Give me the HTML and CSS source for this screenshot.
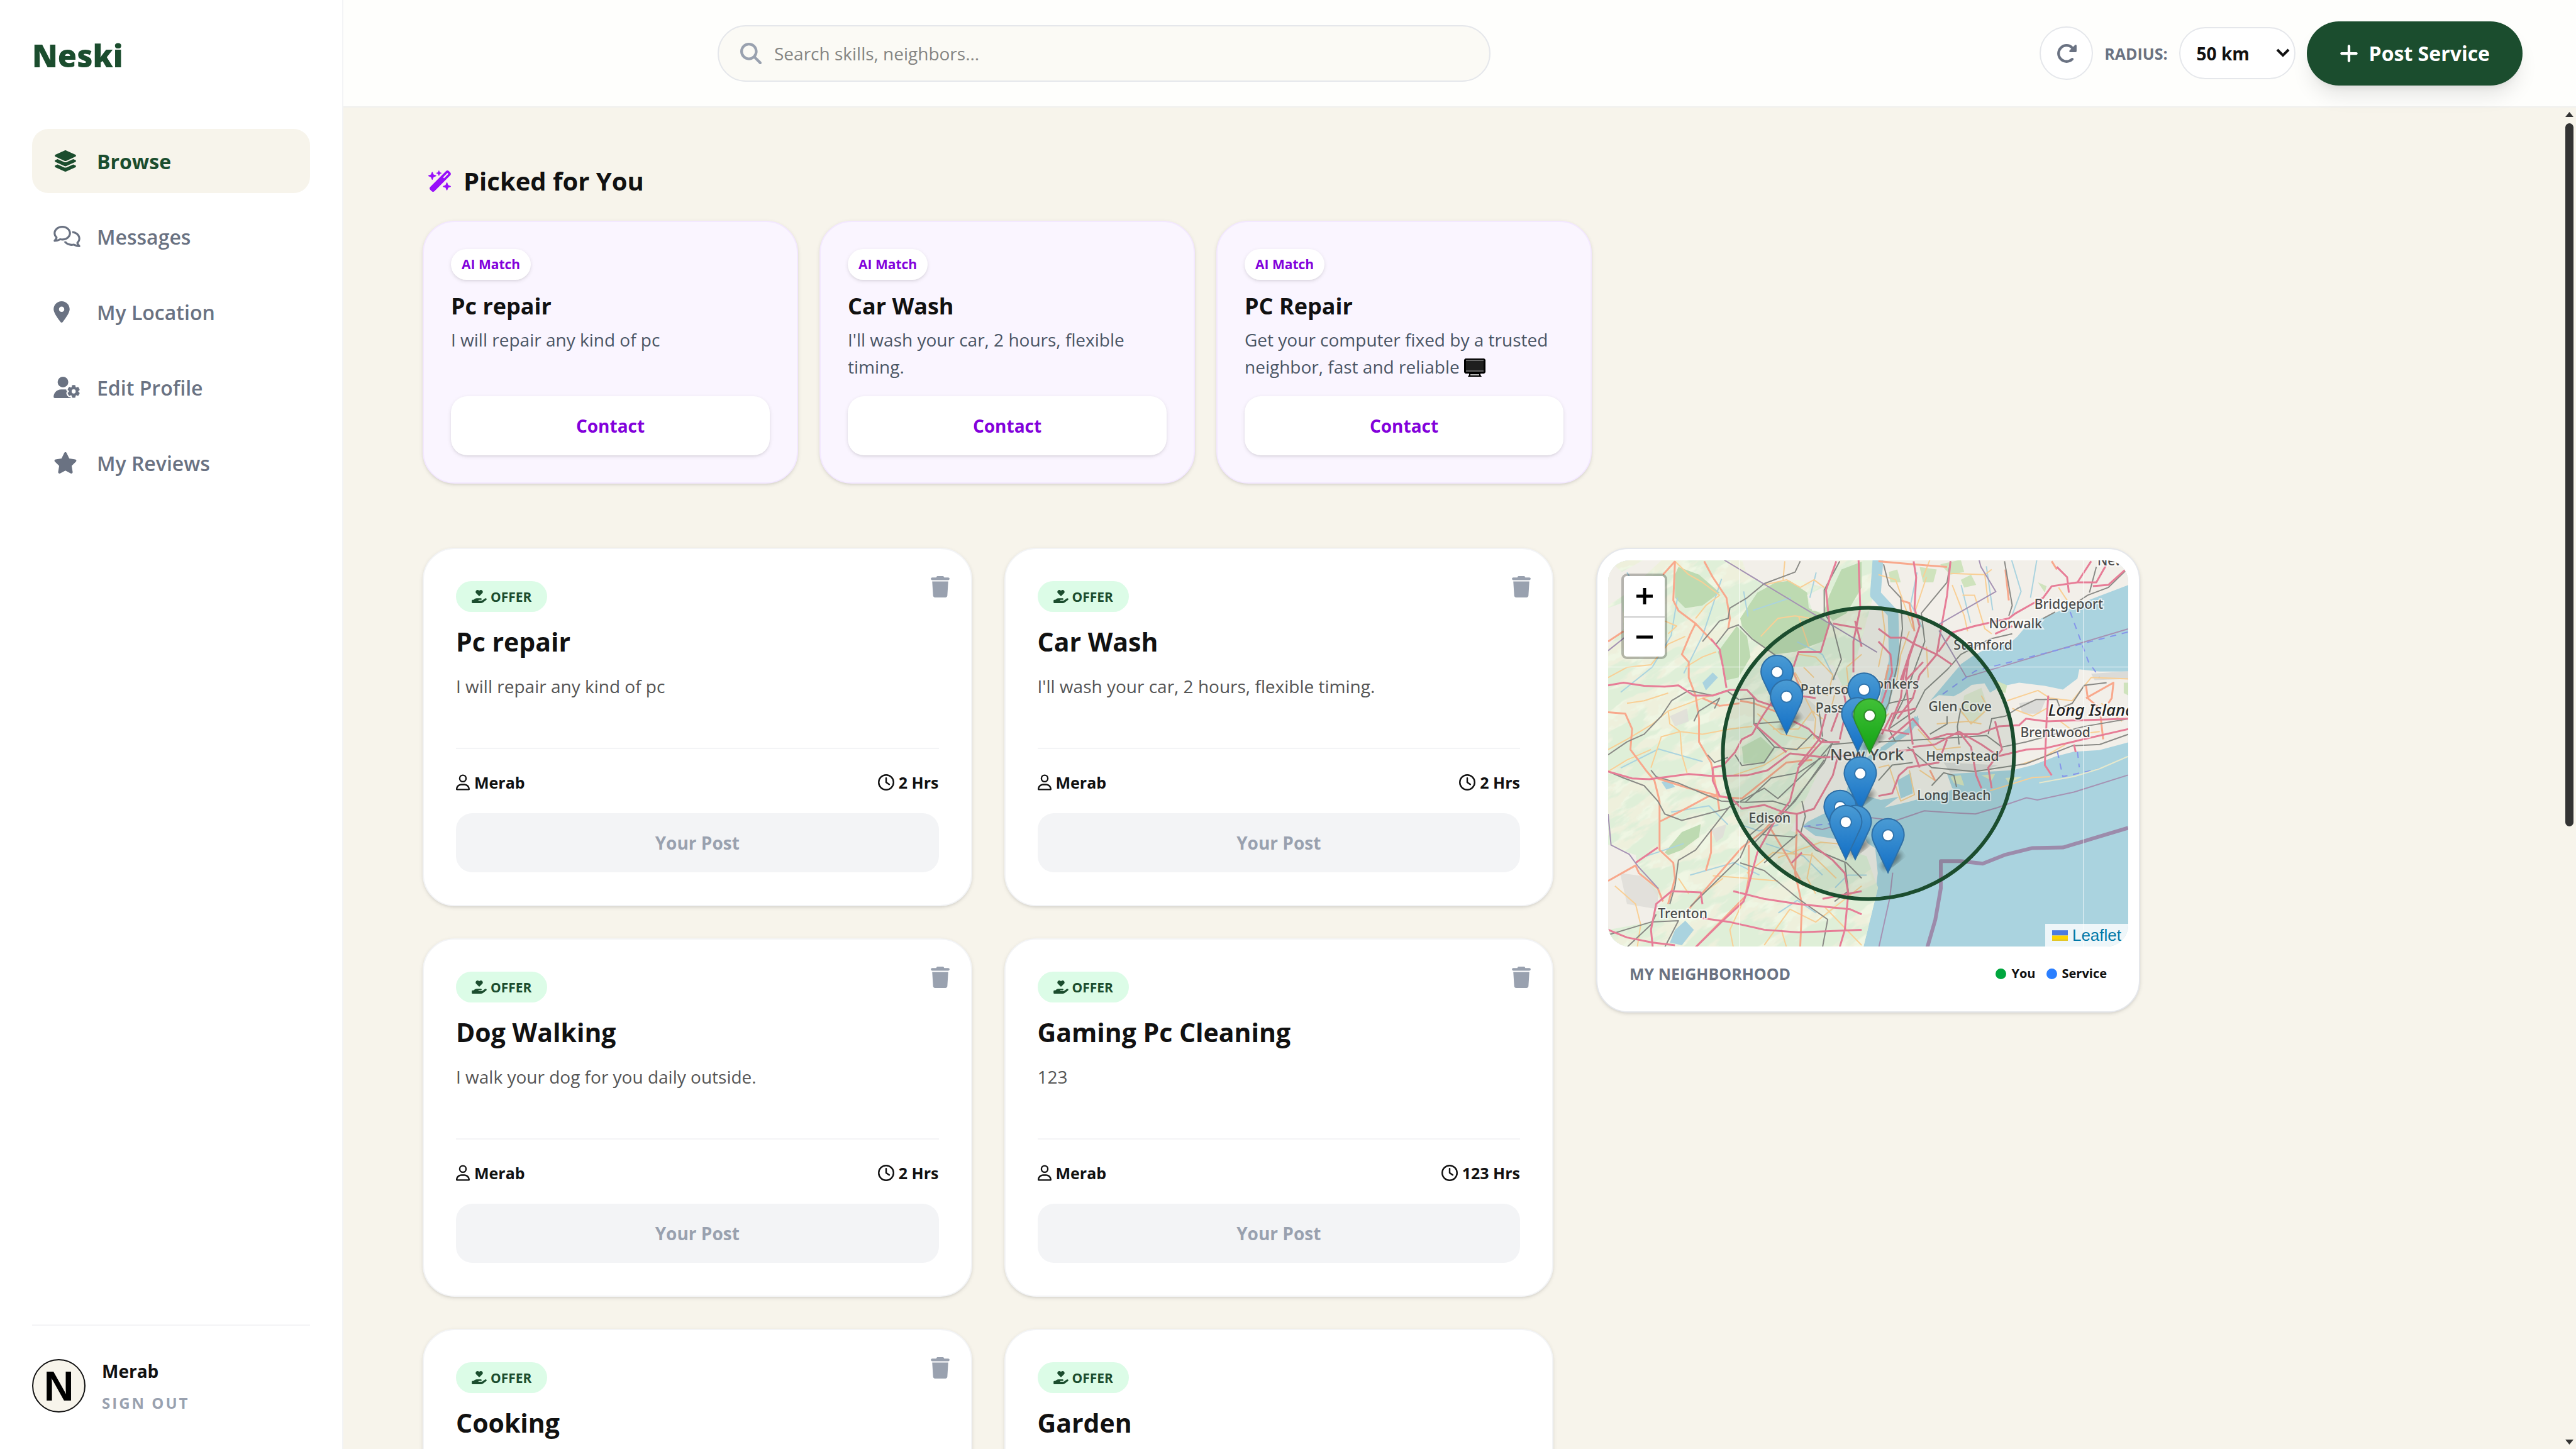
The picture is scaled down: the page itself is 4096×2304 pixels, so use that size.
FILE: index.html
```html
<!DOCTYPE html>
<html lang="en">
<head>
<meta charset="utf-8">
<title>Neski</title>
<link rel="stylesheet" href="styles.css">
</head>
<body>
<svg class="defs" aria-hidden="true">
  <symbol id="i-layers" viewBox="0 0 576 512"><path d="M264.5 5.2c14.9-6.9 32.1-6.9 47 0l218.6 101c8.5 3.9 13.9 12.4 13.9 21.8s-5.4 17.9-13.9 21.8l-218.6 101c-14.9 6.9-32.1 6.9-47 0L45.9 149.8C37.4 145.8 32 137.3 32 128s5.4-17.9 13.9-21.8L264.5 5.2zM476.9 209.6l53.2 24.6c8.5 3.9 13.9 12.4 13.9 21.8s-5.4 17.9-13.9 21.8l-218.6 101c-14.9 6.9-32.1 6.9-47 0L45.9 277.8C37.4 273.8 32 265.3 32 256s5.4-17.9 13.9-21.8l53.2-24.6 152 70.2c23.4 10.8 50.4 10.8 73.8 0l152-70.2zm-152 198.2l152-70.2 53.2 24.6c8.5 3.9 13.9 12.4 13.9 21.8s-5.4 17.9-13.9 21.8l-218.6 101c-14.9 6.9-32.1 6.9-47 0L45.9 405.8C37.4 401.8 32 393.3 32 384s5.4-17.9 13.9-21.8l53.2-24.6 152 70.2c23.4 10.8 50.4 10.8 73.8 0z"/></symbol>
  <symbol id="i-comments" viewBox="0 0 640 512"><path d="M88.2 309.1c9.8-18.3 6.8-40.8-7.5-55.8C59.4 230.9 48 204 48 176c0-63.5 63.8-128 160-128s160 64.5 160 128s-63.8 128-160 128c-13.1 0-25.8-1.3-37.8-3.6c-10.4-2-21.2-.6-30.7 4.2c-4.1 2.1-8.3 4.1-12.6 6c-16 7.2-32.9 13.5-49.9 18c2.8-4.6 5.4-9.1 7.9-13.6c1.1-1.9 2.2-3.9 3.2-5.9zM208 352c114.9 0 208-78.8 208-176S322.9 0 208 0S0 78.8 0 176c0 41.8 17.2 80.1 45.9 110.3c-.9 1.7-1.9 3.5-2.8 5.1c-10.3 18.4-22.3 36.5-36.6 52.1c-6.6 7-8.3 17.2-4.6 25.9C5.8 378.3 14.4 384 24 384c43 0 86.5-13.3 122.7-29.7c4.8-2.2 9.6-4.5 14.2-6.8c15.1 3 30.9 4.5 47.1 4.5zM432 480c16.2 0 31.9-1.6 47.1-4.5c4.6 2.3 9.4 4.6 14.2 6.8C529.5 498.7 573 512 616 512c9.6 0 18.2-5.7 22-14.5c3.8-8.8 2-19-4.6-25.9c-14.2-15.6-26.2-33.7-36.6-52.1c-.9-1.7-1.9-3.4-2.8-5.1C622.8 384.1 640 345.8 640 304c0-94.4-87.9-171.5-198.2-175.8c4.1 15.2 6.2 31.2 6.2 47.8l0 .6c87.2 6.7 144 67.5 144 127.4c0 28-11.4 54.9-32.7 77.2c-14.3 15-17.3 37.6-7.5 55.8c1.1 2 2.2 4 3.2 5.9c2.5 4.5 5.2 9 7.9 13.6c-17-4.5-33.9-10.7-49.9-18c-4.3-1.9-8.5-3.9-12.6-6c-9.5-4.8-20.3-6.2-30.7-4.2c-12.1 2.4-24.8 3.6-37.8 3.6c-61.7 0-110-26.5-136.8-62.3c-16 5.4-32.8 9.4-50 11.8C279 439.8 350 480 432 480z"/></symbol>
  <symbol id="i-pin" viewBox="0 0 384 512"><path d="M215.7 499.2C267 435 384 279.4 384 192C384 86 298 0 192 0S0 86 0 192c0 87.4 117 243 168.3 307.2c12.3 15.3 35.1 15.3 47.4 0zM192 128a64 64 0 1 1 0 128 64 64 0 1 1 0-128z"/></symbol>
  <symbol id="i-usergear" viewBox="0 0 640 512"><path d="M224 0a128 128 0 1 1 0 256A128 128 0 1 1 224 0zM178.3 304h91.4c11.8 0 23.4 1.2 34.5 3.3c-2.1 18.5 7.4 35.6 21.8 44.8c-16.6 10.6-26.7 31.6-20 53.3c4 12.9 9.4 25.5 16.4 37.6s15.2 23.1 24.4 33c15.7 16.9 39.6 18.4 57.2 8.7v.9c0 9.2 2.7 18.5 7.9 26.3H29.7C13.3 512 0 498.7 0 482.3C0 383.8 79.8 304 178.3 304zM436 218.2c0-7 4.5-13.3 11.3-14.8c10.5-2.4 21.5-3.7 32.7-3.7s22.2 1.3 32.7 3.7c6.8 1.5 11.3 7.8 11.3 14.8v17.7c0 7.8 4.8 14.8 11.6 18.7c6.8 3.9 15.1 4.5 21.8 .6l13.8-7.9c6.1-3.5 13.7-2.7 18.5 2.4c7.6 8.1 14.3 17.2 20.1 27.2s10.3 20.4 13.5 31c2.1 6.7-1.1 13.7-7.2 17.2l-14.4 8.3c-6.5 3.7-10 10.9-10 18.4s3.5 14.7 10 18.4l14.4 8.3c6.1 3.5 9.2 10.5 7.2 17.2c-3.3 10.6-7.8 21-13.5 31s-12.5 19.1-20.1 27.2c-4.8 5.1-12.5 5.9-18.5 2.4l-13.8-7.9c-6.7-3.9-15.1-3.3-21.8 .6c-6.8 3.9-11.6 10.9-11.6 18.7v17.7c0 7-4.5 13.3-11.3 14.8c-10.5 2.4-21.5 3.7-32.7 3.7s-22.2-1.3-32.7-3.7c-6.8-1.5-11.3-7.8-11.3-14.8V467.8c0-7.9-4.9-14.9-11.7-18.9c-6.8-3.9-15.2-4.5-22-.6l-13.5 7.8c-6.1 3.5-13.7 2.7-18.5-2.4c-7.6-8.1-14.3-17.2-20.1-27.2s-10.3-20.4-13.5-31c-2.1-6.7 1.1-13.7 7.2-17.2l14-8.1c6.5-3.8 10.1-11.1 10.1-18.6s-3.5-14.8-10.1-18.6l-14-8.1c-6.1-3.5-9.2-10.5-7.2-17.2c3.3-10.6 7.7-21 13.5-31s12.5-19.1 20.1-27.2c4.8-5.1 12.4-5.9 18.5-2.4l13.6 7.8c6.8 3.9 15.2 3.3 22-.6c6.9-3.9 11.7-11 11.7-18.9V218.2zm92.1 133.5a48.1 48.1 0 1 0 -96.1 0 48.1 48.1 0 1 0 96.1 0z"/></symbol>
  <symbol id="i-star" viewBox="0 0 576 512"><path d="M316.9 18C311.6 7 300.4 0 288.1 0s-23.4 7-28.8 18L195 150.3 51.4 171.5c-12 1.8-22 10.2-25.7 21.7s-.7 24.2 7.9 32.7L137.8 329 113.2 474.7c-2 12 3 24.2 12.9 31.3s23 8 33.8 2.3l128.3-68.5 128.3 68.5c10.8 5.7 23.9 4.9 33.8-2.3s14.9-19.3 12.9-31.3L438.5 329 542.7 225.9c8.6-8.5 11.7-21.2 7.9-32.7s-13.7-19.9-25.7-21.7L381.2 150.3 316.9 18z"/></symbol>
  <symbol id="i-search" viewBox="0 0 512 512"><path d="M416 208c0 45.9-14.9 88.3-40 122.7L502.6 457.4c12.5 12.5 12.5 32.8 0 45.3s-32.8 12.5-45.3 0L330.7 376c-34.4 25.2-76.8 40-122.7 40C93.1 416 0 322.9 0 208S93.1 0 208 0S416 93.1 416 208zM208 352a144 144 0 1 0 0-288 144 144 0 1 0 0 288z"/></symbol>
  <symbol id="i-rotate" viewBox="0 0 512 512"><path d="M463.5 224H472c13.3 0 24-10.7 24-24V72c0-9.7-5.8-18.5-14.8-22.2s-19.3-1.7-26.2 5.2L413.4 96.6c-87.6-86.5-228.7-86.2-315.8 1c-87.5 87.5-87.5 229.3 0 316.8s229.3 87.5 316.8 0c12.5-12.5 12.5-32.8 0-45.3s-32.8-12.5-45.3 0c-62.5 62.5-163.8 62.5-226.3 0s-62.5-163.8 0-226.3c62.2-62.2 162.7-62.5 225.3-1L327 183c-6.9 6.9-8.9 17.2-5.2 26.2s12.5 14.8 22.2 14.8H463.5z"/></symbol>
  <symbol id="i-plus" viewBox="0 0 448 512"><path d="M256 80c0-17.7-14.3-32-32-32s-32 14.3-32 32V224H48c-17.7 0-32 14.3-32 32s14.3 32 32 32H192V432c0 17.7 14.3 32 32 32s32-14.3 32-32V288H400c17.7 0 32-14.3 32-32s-14.3-32-32-32H256V80z"/></symbol>
  <symbol id="i-wand" viewBox="0 0 576 512"><path d="M234.7 42.7L197 56.8c-3 1.1-5 4-5 7.2s2 6.1 5 7.2l37.7 14.1L248.8 123c1.1 3 4 5 7.2 5s6.1-2 7.2-5l14.1-37.7L315 71.2c3-1.1 5-4 5-7.2s-2-6.1-5-7.2L277.3 42.7 263.2 5c-1.1-3-4-5-7.2-5s-6.1 2-7.2 5L234.7 42.7zM46.1 395.4c-18.7 18.7-18.7 49.1 0 67.9l34.6 34.6c18.7 18.7 49.1 18.7 67.9 0L529.9 116.5c18.7-18.7 18.7-49.1 0-67.9L495.3 14.1c-18.7-18.7-49.1-18.7-67.9 0L46.1 395.4zM484.6 82.6l-105 105-23.3-23.3 105-105 23.3 23.3zM7.5 117.2C3 118.9 0 123.2 0 128s3 9.1 7.5 10.8L64 160l21.2 56.5c1.7 4.5 6 7.5 10.8 7.5s9.1-3 10.8-7.5L128 160l56.5-21.2c4.5-1.7 7.5-6 7.5-10.8s-3-9.1-7.5-10.8L128 96 106.8 39.5C105.1 35 100.8 32 96 32s-9.1 3-10.8 7.5L64 96 7.5 117.2zm352 256c-4.5 1.7-7.5 6-7.5 10.8s3 9.1 7.5 10.8L416 416l21.2 56.5c1.7 4.5 6 7.5 10.8 7.5s9.1-3 10.8-7.5L480 416l56.5-21.2c4.5-1.7 7.5-6 7.5-10.8s-3-9.1-7.5-10.8L480 352l-21.2-56.5c-1.7-4.5-6-7.5-10.8-7.5s-9.1 3-10.8 7.5L416 352l-56.5 21.2z"/></symbol>
  <symbol id="i-trash" viewBox="0 0 448 512"><path d="M135.2 17.7L128 32H32C14.3 32 0 46.3 0 64S14.3 96 32 96H416c17.7 0 32-14.3 32-32s-14.3-32-32-32H320l-7.2-14.3C307.4 6.8 296.3 0 284.2 0H163.8c-12.1 0-23.2 6.8-28.6 17.7zM416 128H32L53.2 467c1.6 25.3 22.6 45 47.9 45H346.9c25.3 0 46.3-19.7 47.9-45L416 128z"/></symbol>
  <symbol id="i-user" viewBox="0 0 448 512"><path d="M304 128a80 80 0 1 0 -160 0 80 80 0 1 0 160 0zM96 128a128 128 0 1 1 256 0A128 128 0 1 1 96 128zM49.3 464H398.7c-8.9-63.3-63.3-112-129-112H178.3c-65.7 0-120.1 48.7-129 112zM0 482.3C0 383.8 79.8 304 178.3 304h91.4C368.2 304 448 383.8 448 482.3c0 16.4-13.3 29.7-29.7 29.7H29.7C13.3 512 0 498.7 0 482.3z"/></symbol>
  <symbol id="i-clock" viewBox="0 0 512 512"><path d="M464 256A208 208 0 1 1 48 256a208 208 0 1 1 416 0zM0 256a256 256 0 1 0 512 0A256 256 0 1 0 0 256zM232 120V256c0 8 4 15.5 10.7 20l96 64c11 7.4 25.9 4.4 33.3-6.7s4.4-25.9-6.7-33.3L280 243.2V120c0-13.3-10.7-24-24-24s-24 10.7-24 24z"/></symbol>
  <symbol id="i-give" viewBox="0 0 576 512"><path d="M148 76.6C148 34.3 182.3 0 224.6 0c20.3 0 39.8 8.1 54.1 22.4l9.3 9.3 9.3-9.3C311.6 8.1 331.1 0 351.4 0C393.7 0 428 34.3 428 76.6c0 20.3-8.1 39.8-22.4 54.1L302.1 234.1c-7.8 7.8-20.5 7.8-28.3 0L170.4 130.7C156.1 116.4 148 96.9 148 76.6zM568.2 336.3c13.1 17.8 9.3 42.8-8.5 55.9L433.1 485.5c-23.4 17.2-51.6 26.5-80.7 26.5H192 32c-17.7 0-32-14.3-32-32V416c0-17.7 14.3-32 32-32H68.8l44.9-36c22.7-18.2 50.9-28 80-28H272h16 64c17.7 0 32 14.3 32 32s-14.3 32-32 32H288 272c-8.8 0-16 7.2-16 16s7.2 16 16 16H392.6l119.7-88.2c17.8-13.1 42.8-9.3 55.9 8.5z"/></symbol>
</svg>

<div class="app">
  <aside class="sidebar">
    <div class="logo">Neski</div>
    <nav class="nav">
      <a class="nav-item active" href="#"><span class="nav-icon"><svg class="w576"><use href="#i-layers"/></svg></span>Browse</a>
      <a class="nav-item" href="#"><span class="nav-icon"><svg class="w640"><use href="#i-comments"/></svg></span>Messages</a>
      <a class="nav-item" href="#"><span class="nav-icon"><svg class="w384"><use href="#i-pin"/></svg></span>My Location</a>
      <a class="nav-item" href="#"><span class="nav-icon"><svg class="w640"><use href="#i-usergear"/></svg></span>Edit Profile</a>
      <a class="nav-item" href="#"><span class="nav-icon"><svg class="w576"><use href="#i-star"/></svg></span>My Reviews</a>
    </nav>
    <div class="account">
      <div class="avatar">N</div>
      <div class="account-text">
        <div class="account-name">Merab</div>
        <button class="signout" type="button">SIGN OUT</button>
      </div>
    </div>
  </aside>

  <div class="page">
    <header class="topbar">
      <label class="search">
        <svg><use href="#i-search"/></svg>
        <input type="text" placeholder="Search skills, neighbors..." aria-label="Search">
      </label>
      <div class="actions">
        <button class="refresh" type="button" aria-label="Refresh"><svg><use href="#i-rotate"/></svg></button>
        <label class="radius-label" for="radius">RADIUS:</label>
        <div class="select">
          <select id="radius"><option>50 km</option></select>
          <svg viewBox="0 0 22 14"><path d="M2 2L11 11L20 2" fill="none" stroke="#111" stroke-width="4"/></svg>
        </div>
        <button class="post" type="button"><svg><use href="#i-plus"/></svg>Post Service</button>
      </div>
    </header>

    <div class="body">
      <main class="content">
        <h2 class="picked-title"><svg><use href="#i-wand"/></svg>Picked for You</h2>
        <div class="picked">
          <article class="pick">
            <span class="ai">AI Match</span>
            <h3>Pc repair</h3>
            <p>I will repair any kind of pc</p>
            <button type="button">Contact</button>
          </article>
          <article class="pick">
            <span class="ai">AI Match</span>
            <h3>Car Wash</h3>
            <p>I'll wash your car, 2 hours, flexible timing.</p>
            <button type="button">Contact</button>
          </article>
          <article class="pick">
            <span class="ai">AI Match</span>
            <h3>PC Repair</h3>
            <p>Get your computer fixed by a trusted neighbor, fast and reliable <svg class="monitor" viewBox="0 0 34 29"><path d="M2 0H32L34 2V22L32 24H26V26L28 29H6L8 26V24H2L0 22V2Z" fill="#000"/><path d="M3 3H31V20H3Z" fill="#1f1f1f"/><path d="M3 3H31M3 20H31" stroke="#bbb"/><path d="M10 26H24" stroke="#bbb" stroke-width="2"/></svg></p>
            <button type="button">Contact</button>
          </article>
        </div>

        <div class="columns">
          <section class="posts">
            <article class="card">
              <button class="trash" type="button" aria-label="Delete"><svg><use href="#i-trash"/></svg></button>
              <span class="offer"><svg><use href="#i-give"/></svg>OFFER</span>
              <h3>Pc repair</h3>
              <p>I will repair any kind of pc</p>
              <div class="meta"><span><svg class="user"><use href="#i-user"/></svg>Merab</span><span><svg class="clock"><use href="#i-clock"/></svg>2 Hrs</span></div>
              <button class="own" type="button" disabled>Your Post</button>
            </article>
            <article class="card">
              <button class="trash" type="button" aria-label="Delete"><svg><use href="#i-trash"/></svg></button>
              <span class="offer"><svg><use href="#i-give"/></svg>OFFER</span>
              <h3>Car Wash</h3>
              <p>I'll wash your car, 2 hours, flexible timing.</p>
              <div class="meta"><span><svg class="user"><use href="#i-user"/></svg>Merab</span><span><svg class="clock"><use href="#i-clock"/></svg>2 Hrs</span></div>
              <button class="own" type="button" disabled>Your Post</button>
            </article>
            <article class="card">
              <button class="trash" type="button" aria-label="Delete"><svg><use href="#i-trash"/></svg></button>
              <span class="offer"><svg><use href="#i-give"/></svg>OFFER</span>
              <h3>Dog Walking</h3>
              <p>I walk your dog for you daily outside.</p>
              <div class="meta"><span><svg class="user"><use href="#i-user"/></svg>Merab</span><span><svg class="clock"><use href="#i-clock"/></svg>2 Hrs</span></div>
              <button class="own" type="button" disabled>Your Post</button>
            </article>
            <article class="card">
              <button class="trash" type="button" aria-label="Delete"><svg><use href="#i-trash"/></svg></button>
              <span class="offer"><svg><use href="#i-give"/></svg>OFFER</span>
              <h3>Gaming Pc Cleaning</h3>
              <p>123</p>
              <div class="meta"><span><svg class="user"><use href="#i-user"/></svg>Merab</span><span><svg class="clock"><use href="#i-clock"/></svg>123 Hrs</span></div>
              <button class="own" type="button" disabled>Your Post</button>
            </article>
            <article class="card">
              <button class="trash" type="button" aria-label="Delete"><svg><use href="#i-trash"/></svg></button>
              <span class="offer"><svg><use href="#i-give"/></svg>OFFER</span>
              <h3>Cooking</h3>
            </article>
            <article class="card">
              <span class="offer"><svg><use href="#i-give"/></svg>OFFER</span>
              <h3>Garden</h3>
            </article>
          </section>

          <aside class="map-card">
            <div class="map">
              <svg class="map-art" viewBox="0 0 825 614" preserveAspectRatio="xMidYMid slice">
                <defs>
                  <filter id="woods" x="0" y="0" width="100%" height="100%">
                    <feTurbulence type="fractalNoise" baseFrequency=".01 .035" numOctaves="5" seed="7"/>
                    <feColorMatrix values="0 0 0 0 .74  0 0 0 0 .86  0 0 0 0 .69  12 0 0 0 -5.400"/>
                  </filter>
                  <filter id="fields" x="0" y="0" width="100%" height="100%">
                    <feTurbulence type="fractalNoise" baseFrequency=".03 .05" numOctaves="4" seed="21"/>
                    <feColorMatrix values="0 0 0 0 .86  0 0 0 0 .92  0 0 0 0 .77  9 0 0 0 -4.4"/>
                  </filter>
                  <filter id="soft"><feGaussianBlur stdDeviation="4"/></filter>
                  <linearGradient id="blue" x1="0" y1="0" x2="0" y2="1"><stop offset="0" stop-color="#4a9bd4"/><stop offset="1" stop-color="#126fc6"/></linearGradient>
                  <linearGradient id="green" x1="0" y1="0" x2="0" y2="1"><stop offset="0" stop-color="#41c037"/><stop offset="1" stop-color="#12a314"/></linearGradient>
                  <clipPath id="inland"><path d="M0 0H425L420 60L390 170L350 300L290 430L410 470L428 520L405 614H0Z"/></clipPath>
                  <g id="shade"><ellipse cx="17" cy="-12" rx="19" ry="7" transform="rotate(-38)" fill="#000" opacity=".45" filter="url(#soft)"/></g>
                  <path id="drop" d="M-25.5-60.5C-25.5-75-14-86.500 0-86.500S25.500-75 25.500-60.500C25.500-52 21-46 18-39L0-1L-18-39C-21-46-25.500-52-25.500-60.500Z"/>
                </defs>
                <rect width="825" height="614" fill="#aad3df"/>
                <g transform="scale(.578 .4932) translate(-52 -73)" fill="#f2efe9">
                  <path d="M52 73H1479V137L1440 155L1400 172L1360 190L1330 225L1280 240L1240 262L1200 285L1175 320L1150 345L1100 352L1060 378L1010 405L990 430L960 445L940 480L925 505L900 530L880 560L885 600L860 640L820 700L760 740L735 790L720 830L660 880L600 915L585 930L620 960L700 975L745 950L765 985L785 1000L792 1080L785 1150L775 1210L760 1270L748 1319H52Z"/>
                  <path d="M770 690L830 640L860 620L905 605L900 545L930 530L960 508L1000 512L1020 500L1050 475L1085 470L1100 500L1130 480L1180 468L1250 478L1300 490L1340 455L1345 425L1400 432L1479 432V660L1400 685L1330 690L1280 705L1230 728L1180 750L1140 775L1090 795L1040 790L990 815L880 850L810 870L850 835L800 845L755 830L750 780Z"/>
                </g>
                <path d="M200 0H825V40L640 110L560 165L480 260L400 300L330 330L420 150L430 0H200Z" fill="#f2efe9"/>
                <g clip-path="url(#inland)">
                  <rect width="825" height="614" fill="#eef0dc"/>
                  <g transform="rotate(-32 200 300)"><rect x="-260" y="-260" width="1000" height="1100" filter="url(#fields)"/><rect x="-260" y="-260" width="1000" height="1100" filter="url(#woods)"/></g>
                </g>
                <g transform="translate(-24.5 -25.600) scale(.2721 .4082)">
                  <g fill="#bddab1">
                    <path d="M500 90L620 120L740 190L640 240L540 250L480 210L480 120Z"/>
                    <path d="M860 290L960 190L1120 130L1250 190L1260 250L1330 270L1380 320L1340 380L1180 420L1060 430L950 380L870 320Z"/>
                    <path d="M1380 200L1450 100L1568 70V170L1480 270L1400 300L1350 260Z"/>
                    <path d="M730 420L840 320L900 360L920 440L850 520L780 530Z"/>
                    <path d="M870 790L980 750L1060 800L1000 850L880 855Z" opacity=".8"/>
                    <path d="M420 1200L520 1120L630 1090L620 1140L520 1190L440 1210Z"/>
                  </g>
                  <g fill="#f2efe9">
                    <path d="M90 240L180 200L400 65L300 62L170 110L90 62Z"/><path d="M90 250L170 230L180 330L90 400Z"/>
                    <path d="M870 62H1440L1350 170L1200 140L1000 155L900 120Z"/><path d="M1250 200L1340 170L1350 260L1280 260Z"/>
                    <path d="M90 1170L250 1210L270 1270L400 1390L340 1470L90 1500Z"/>
                    <path d="M1180 480L1400 470L1460 560L1568 600V800L1350 780L1240 700L1150 600Z"/>
                  </g>
                  <g fill="#dfddd8" opacity=".8"><path d="M160 1280L280 1290L380 1350L380 1420L200 1400Z"/><path d="M450 670L550 640L560 690L480 710Z"/><path d="M690 1110L780 1090L760 1140L720 1160Z"/><path d="M1180 560L1300 630L1290 690L1170 680Z"/></g>
                  <g fill="#aad3df"><path d="M400 925L450 920L480 945L430 955Z"/><path d="M640 540L700 500L730 520L660 570Z"/><path d="M480 1500L540 1465L590 1500L520 1560L450 1550Z"/></g>
                </g>
                <g transform="translate(428.800 -25.600) scale(.2721 .4082)" fill="#cfe3bd">
                  <path d="M60 110L110 100L130 150L70 150Z"/><path d="M360 80L480 62L500 110L420 120Z"/><path d="M480 140L540 120L570 160L500 170Z"/><path d="M240 90L340 100L320 150L260 150Z"/><path d="M1430 540H1458V590L1430 580Z"/><path d="M930 150L980 165L970 190Z"/>
                  <path d="M500 590L600 560L640 640L560 700L480 660Z" opacity=".5"/><path d="M680 530L750 550L740 580L690 570Z"/>
                  <path d="M820 620L980 600L940 660L840 660Z" fill="#dbdbd8"/><path d="M380 850L700 860L620 880L420 890Z" fill="#dbdbd8"/><path d="M1240 505L1458 495V525L1260 530Z" fill="#dbdbd8"/>
                  <path d="M110 920L190 890L200 970L130 990Z" fill="#aad3df"/><path d="M400 895L780 880L960 850L960 895L700 950L500 965L430 950Z" fill="#aad3df"/><path d="M420 905L480 900L500 940L440 930ZM600 900L680 895L660 920ZM740 910L840 905L760 930Z" fill="#dbe6c0"/>
                </g>
                <g class="water-lines">
                  <path class="hudson" d="M428 0L424 55L452 85L454 160L436 235L405 290L396 330L385 375"/>
                  <path class="hudson thin" d="M396 330L415 315L450 290L478 270L490 250"/>
                  <path d="M30 20L60 70L40 130M110 60L100 120L70 170L20 210M180 30L150 120L120 180M230 80L260 70L290 60M215 50L222 90M330 20L320 60M640 0L655 50L640 90M680 0L670 60M600 10L610 80M560 40L575 100M20 330L80 300L150 320M100 400L160 390L190 420M130 500L200 480L240 500M60 470L120 450M270 560L300 540L330 560M210 420L240 430L270 420M300 130L340 150L360 190M490 20L480 70L500 110M250 450L310 470L340 500M360 520L380 500L410 500"/>
                </g>
                <g transform="translate(-24.500 -25.600) scale(.2721 .4082)">
                  <g class="road minor">
                    <path d="M90 520L200 480L340 470L440 390L540 360M90 800L200 760L350 700L440 650L640 600L740 580M440 650L450 700L510 730L520 820L550 890M510 730L400 750L340 870M510 730L640 740L800 720L930 710M480 68L560 120L640 150L740 200L660 240L600 290M540 480L640 440L720 420M980 360L1080 290L1180 280L1270 290L1350 270M1000 160L1130 140L1210 170L1290 140L1350 170M1120 68L1110 140M130 1330L250 1400L280 1480L260 1568M900 1280L1050 1200L1280 1210L1420 1300M1000 1560L1150 1420L1300 1470L1568 1330M1200 430L1300 440L1400 510L1370 590L1230 560L1180 500"/>
                    <path d="M90 885L200 840L340 800M200 620L300 610L440 580M420 300L490 320L440 350M820 900L1000 860L1140 800L1300 790M850 560L930 480L1000 420M960 660L1100 740L1250 760M1050 720L1200 720L1280 650L1340 680M1240 600L1300 680L1290 760M1080 1220L1200 1190L1330 1160L1500 1170M870 1400L800 1500L820 1568M700 1290L900 1300L1080 1310M1280 1200L1250 1300L1300 1360M1460 700L1500 600L1480 480L1568 430M1390 640L1420 560L1568 540M640 1360L760 1300M560 1360L500 1300M1100 1500L1130 1568M1350 1410L1568 1560M1480 1100L1568 1090M1200 280L1230 340L1260 400M1290 520L1230 480"/>
                  </g>
                  <g class="road major">
                    <path d="M480 68L470 220L500 260L600 310L700 380M650 68L700 130L780 210L800 290L790 330M600 310L570 350L520 430L560 460L560 520L600 590L620 680L620 770L690 850L720 950L740 1040M90 655L190 660L230 720L220 800L310 880L360 920L390 1000L390 1080L390 1190L470 1240L480 1300L440 1400M390 1080L540 1030L680 980L870 990L1000 920L1130 850L1280 840M560 1420L700 1310L870 1180L990 1120L1100 1040M1190 1110L1180 1280L1220 1400L1210 1568M90 1310L250 1250L270 1280L380 1340L410 1390"/>
                    <path d="M690 1110L690 1200L660 1270M860 610L940 620L1100 660M640 600L740 630L860 620M1040 1110L1130 1210L1230 1330M910 1170L910 1300L890 1370L600 1568M370 910L560 950L740 980M90 380L180 340M1170 500L1230 590M1140 480L1170 570M410 120L480 68"/>
                  </g>
                  <g class="road rail">
                    <path d="M90 820L200 770L300 740L400 670L460 610L560 570L700 590L780 570L850 605L940 600L940 700L1060 790L1000 850L870 862L830 820M90 885L180 910L300 940L380 1000L420 1050L520 1075L780 1030L850 1005L1000 950L1080 990L1300 850L1390 780L1568 770M340 880L370 905L500 930L640 970L750 1000L900 1005L1050 1000L1150 1020L1350 850L1400 770M800 1020L600 1190L500 1230L480 1330L450 1400M90 1520L340 1470L500 1465L420 1568M570 1410L860 1220L920 1130L1010 1080M640 380L740 300L790 290L800 250L900 210L1000 155L1180 110L1210 68M720 390L790 330L850 315L930 370L1080 440M1440 68L1350 180L1350 270L1400 320L1450 450L1400 530M860 1240L1000 1270L1200 1380L1370 1460L1340 1568M1220 1000L1240 1060L1210 1130L1300 1190L1480 1240L1568 1300"/>
                    <path d="M940 700L1130 690M1060 790L1190 800L1280 740L1390 775M890 1005L1040 910L1200 890L1360 820M930 1170L1180 1000L1350 840M590 690L620 650L740 600L710 640M200 1568L340 1480L370 1440M670 820L710 850L790 830M990 1130L1180 1140M1000 1240L1190 1130M1320 650L1340 750M1410 1390L1490 1350L1470 1240"/>
                  </g>
                  <g class="road motor">
                    <path d="M90 550L180 540L300 552L420 555L500 550L590 590L700 590L800 568L900 568L960 610L1050 630L1200 590L1300 600M90 885L230 912L330 915L560 895L700 903L900 900L1020 880L1150 815L1350 830L1568 820M690 370L740 410L760 480L780 560M700 870L760 862L830 810L870 760L930 740L990 670L1060 600M700 870L700 920L740 980L810 990L870 1030L1000 1015L1100 1040L1190 1050L1190 1110L1300 1180L1400 1230L1470 1280L1490 1360L1470 1500L1440 1568M1190 1050L1290 1030L1400 900L1440 800M600 1568L750 1470L880 1390L900 1350L960 1200L1060 1080L1150 1000L1200 870L1350 760M820 1350L1000 1380L1200 1400L1500 1420L1568 1440M350 1568L340 1500L370 1400L460 1350L630 1355L640 1400M640 1455L800 1470L1000 1500L1200 1510L1568 1500M90 1500L200 1530L350 1550L480 1560M250 1240L380 1180M1170 480L1200 420L1330 420L1380 310L1360 180L1420 68"/>
                    <path d="M940 700L1060 770L1130 810M1170 690L1260 720L1330 770L1440 770M1400 310L1568 330M1550 62L1560 250L1520 380L1520 500M1440 760L1480 640L1460 560M1360 660L1320 760L1200 860M1390 730L1440 640M1220 1200L1160 1240M1340 1380L1568 1350M1530 300L1568 400"/>
                  </g>
                </g>
                <g transform="translate(428.800 -25.600) scale(.2721 .4082)">
                  <g class="road minor">
                    <path d="M0 120L100 140L200 330M430 160L500 280L520 340M490 200L560 200L620 330L660 350M420 115L620 120L660 100M640 230L620 120M0 870L60 860L130 1000L210 975L180 880M650 960L900 908L1000 905M750 610L930 570L1000 600L1130 610L1240 520L1458 525M470 640L540 700L640 640L600 590M0 480L40 350L20 250M100 560L130 430L180 340M280 400L290 520M0 700L60 660M230 720L340 800L480 790M340 700L520 690L600 700M780 640L900 670L980 640M1060 690L1160 740L1290 730M1300 620L1420 690M820 860L960 830L1090 780M400 840L540 830L700 840M240 880L330 920M1050 170L1100 220M280 130L200 290M300 62L260 130"/>
                  </g>
                  <g class="road major"><path d="M1210 550L1220 600L1290 640L1310 760M1210 600L1370 540L1360 600L1340 620M130 220L180 230L210 340M0 68L200 80L400 90M740 100L760 220M300 880L330 920M1010 68L1040 100M60 470L30 560"/></g>
                  <g class="road rail">
                    <path d="M30 80L60 160L130 210L140 330L110 470L60 620L0 700M420 68L400 150L250 270L270 380L220 470L150 600L60 720M735 68L780 240L760 280M1440 105L1340 170L1220 200L1130 240M1030 265L960 290M780 350L650 370L480 430L400 490L270 570L210 650L60 720L100 770M300 740L400 700L400 670M0 770L300 760L630 745L720 790L860 770L1200 710L1458 680M170 790L310 870L560 885L860 855L1130 785L1290 780L1458 740M480 640L460 710L470 780M640 740L660 680L740 670L810 640L920 605L1040 605L1060 640L1130 620L1200 550L1330 540M310 940L380 890L440 900L455 945M60 620L200 600M0 920L80 860L200 850M1270 90L1230 190"/>
                  </g>
                  <g class="road motor">
                    <path d="M205 68L220 130L210 250L240 320L200 400L150 500L130 600L60 720M420 68L400 200L370 310L340 430L240 510L200 600L110 680M1040 90L1100 130L1110 190M1240 68L1160 150L1010 165L960 210L800 270L760 290L560 320L430 345L350 420M1160 150L1270 150L1330 80M1440 100L1340 160L1250 165M0 330L70 365L150 365L210 390L340 430L430 470M60 760L200 680L300 760L400 740L580 740L700 710L820 705L860 680L980 690L1458 680M200 790L330 780L470 730L600 780L700 825L860 800L970 795L1130 770L1458 720M990 590L980 690L970 860L1010 900M680 690L720 800L640 870L660 950M480 740L540 790L570 900L600 950M0 980L80 970L120 900L170 870L350 850L400 760M1140 780L1150 810M130 530L180 430L230 340"/>
                    <path d="M0 380L70 430L80 500L20 620M180 430L160 520L180 680L200 780M20 740L80 660L220 640M260 460L160 530M60 810L200 800L240 870M0 720L180 740M680 350L780 320"/>
                  </g>
                </g>
                <g transform="scale(.578 .4932) translate(-52 -73)">
                  <path class="bound" d="M370 73L790 370M960 280L1116 175L1075 95L1070 73M960 300L1035 450L1479 295M600 930L640 940L760 900L840 912L920 880L980 885L1060 890L1120 870L1200 838L1230 845L1330 820L1479 765M833 1079L825 1160L795 1319M52 890L60 990L110 1020L135 1060L190 1130M52 365L100 320"/>
                  <path class="bound heavy" d="M928 1319L950 1230L965 1130L965 1042L1020 1042L1080 1050L1140 1022L1215 1000L1300 998L1380 970L1479 935"/>
                  <path class="ferry" d="M970 505L1060 430L1479 305M1320 240L1370 400L1400 450M1285 690L1300 770L1400 745M590 930L760 910M1340 690L1345 740"/>
                  <path class="barrier" d="M1235 790L1330 770L1400 745L1479 705"/>
                </g>
                <path class="grid" d="M208 0V614M754 0V614M0 170H825"/>
                <g class="places">
                  <text x="776" y="9">New Haven</text><text x="676" y="78">Bridgeport</text><text x="604" y="108">Norwalk</text><text x="548" y="142">Stamford</text><text x="508" y="240">Glen Cove</text><text x="654" y="281">Brentwood</text><text x="504" y="319">Hempstead</text><text x="490" y="381">Long Beach</text><text x="305" y="213">Paterson</text><text x="329" y="242">Passaic</text><text x="413" y="204">Yonkers</text><text x="223" y="417">Edison</text><text x="79" y="568">Trenton</text>
                  <text class="big" x="352" y="318">New York</text><text class="big region" x="698" y="247">Long Island</text>
                </g>
                <circle cx="413" cy="307" r="231" fill="#1b4d2e" fill-opacity=".1" stroke="#1b4d2e" stroke-width="6"/>
                <g><use href="#shade" x="268" y="238"/><use href="#shade" x="283" y="277"/><use href="#shade" x="406" y="266"/><use href="#shade" x="415" y="307"/><use href="#shade" x="400" y="399"/><use href="#shade" x="392" y="476"/><use href="#shade" x="444" y="497"/></g>
                <g class="pin"><g transform="translate(268 238)"><use href="#drop"/><circle cy="-60" r="9"/></g><g transform="translate(406 266)"><use href="#drop"/><circle cy="-60" r="9"/></g><g transform="translate(283 277)"><use href="#drop"/><circle cy="-60" r="9"/></g><g transform="translate(396 305)"><use href="#drop"/><circle cy="-60" r="9"/></g><g class="me" transform="translate(415 307)"><use href="#drop"/><circle cy="-60" r="9"/></g><g transform="translate(400 399)"><use href="#drop"/><circle cy="-60" r="9"/></g><g transform="translate(368 452)"><use href="#drop"/><circle cy="-60" r="9"/></g><g transform="translate(392 476)"><use href="#drop"/><circle cy="-60" r="9"/></g><g transform="translate(377 476)"><use href="#drop"/><circle cy="-60" r="9"/></g><g transform="translate(444 497)"><use href="#drop"/><circle cy="-60" r="9"/></g></g>
              </svg>
              <div class="zoom">
                <button type="button" aria-label="Zoom in"><svg viewBox="0 0 26 26"><path d="M0 13H26M13 0V26"/></svg></button>
                <button type="button" aria-label="Zoom out"><svg viewBox="0 0 26 26"><path d="M0 13H26"/></svg></button>
              </div>
              <a class="credit" href="#"><svg viewBox="0 0 12 8"><path fill="#4C7BE1" d="M0 0h12v4H0z"/><path fill="#FFD500" d="M0 4h12v3H0z"/><path fill="#E0BC00" d="M0 7h12v1H0z"/></svg>Leaflet</a>
            </div>
            <div class="map-foot">
              <span class="map-title">MY NEIGHBORHOOD</span>
              <span class="legend"><i class="dot you"></i>You</span>
              <span class="legend"><i class="dot service"></i>Service</span>
            </div>
          </aside>
        </div>
      </main>
      <div class="scrollbar" aria-hidden="true">
        <svg viewBox="0 0 13 8"><path d="M0 8L6.500 0L13 8Z"/></svg>
        <div class="track"><div class="thumb"></div></div>
        <svg viewBox="0 0 13 8"><path d="M0 0L6.500 8L13 0Z"/></svg>
      </div>
    </div>
  </div>
</div>
</body>
</html>
```
FILE: styles.css
```css
* { box-sizing: border-box; }
body, h2, h3, p { margin: 0; }
body { font-family: "Open Sans", "Noto Sans", sans-serif; font-size: 28px; color: #111; background: #f7f4eb; }
button, input, select { font: inherit; color: inherit; margin: 0; padding: 0; border: 0; background: none; }
a { color: inherit; text-decoration: none; }
svg { display: block; fill: currentColor; }
.defs { position: absolute; width: 0; height: 0; }

.app { display: flex; height: 100vh; overflow: hidden; }

/* Sidebar */
.sidebar { display: flex; flex-direction: column; width: 546px; flex: none; padding: 51px 51px 56px; background: #fff; border-right: 2px solid #f3f4f6; }
.logo { font-size: 49px; line-height: 74px; font-weight: 800; color: #1b4d2e; }
.nav { display: flex; flex-direction: column; gap: 18px; margin-top: 80px; }
.nav-item { display: flex; align-items: center; gap: 26px; height: 102px; padding: 0 34px; border-radius: 26px; font-size: 32px; font-weight: 600; color: #6a7282; }
.nav-item.active { background: #f7f4eb; color: #1b4d2e; font-weight: 700; }
.nav-icon { width: 43px; }
.nav-icon svg { height: 34px; }
.w576 { width: 38px; }
.w640 { width: 43px; }
.w384 { width: 26px; }
.account { display: flex; gap: 26px; margin-top: auto; padding-top: 51px; border-top: 2px solid #f3f4f6; align-items: center; }
.avatar { display: flex; align-items: center; justify-content: center; width: 85px; height: 85px; border: 2px solid #111; border-radius: 50%; background: #f7f4eb; color: #000; font: 700 66px/80px "Liberation Sans", sans-serif; }
.account-name { font-size: 28px; line-height: 43px; font-weight: 700; }
.signout { display: block; margin-top: 12px; font-size: 24px; line-height: 34px; font-weight: 700; color: #99a1af; letter-spacing: 3px; }

/* Top bar */
.page { flex: 1; min-width: 0; display: flex; flex-direction: column; }
.topbar { display: flex; align-items: center; height: 171px; padding: 0 85px; background: #fefefc; border-bottom: 2px solid #f0f0ee; flex: none; }
.search { display: flex; align-items: center; gap: 20px; flex: 0 1 1229px; height: 90px; margin-left: 510px; padding: 0 34px; border: 2px solid #e5e7eb; border-radius: 45px; background: #fbfaf5; }
.search svg { width: 34px; height: 34px; color: #99a1af; flex: none; }
.search input { flex: 1; font-size: 28px; outline: 0; }
.search input::placeholder { color: #858583; opacity: 1; }
.actions { display: flex; align-items: center; gap: 18px; margin-left: auto; }
.refresh { display: flex; align-items: center; justify-content: center; width: 85px; height: 85px; border: 2px solid #e5e7eb; border-radius: 50%; background: #fff; color: #6a7282; }
.refresh svg { width: 34px; height: 34px; }
.radius-label { font-size: 25px; font-weight: 700; color: #6a7282; }
.select { position: relative; }
.select select { appearance: none; width: 185px; height: 83px; padding: 0 26px; border: 2px solid #e5e7eb; border-radius: 42px; background: #fff; font-size: 28px; font-weight: 700; }
.select svg { position: absolute; right: 9px; top: 34px; width: 22px; height: 14px; pointer-events: none; }
.post { display: flex; align-items: center; gap: 17px; height: 102px; padding: 0 52px; border-radius: 51px; background: #1b4d2e; color: #fff; font-size: 32px; font-weight: 700; box-shadow: 0 21px 32px -6px rgba(0,0,0,.1), 0 9px 13px -9px rgba(0,0,0,.1); }
.post svg { width: 30px; height: 34px; }

/* Scroll area */
.body { display: flex; flex: 1; min-height: 0; }
.content { flex: 1; min-width: 0; padding: 87px 126px; overflow: hidden; }
.scrollbar { display: flex; flex-direction: column; width: 17px; padding: 7px 4px 7px 0; flex: none; color: #333; }
.scrollbar svg { width: 13px; height: 8px; }
.track { display: flex; flex-direction: column; flex: 1; padding: 10px 0; }
.track::after { content: ""; flex: 19; }
.thumb { flex: 22; border-radius: 7px; background: #333; }

/* Picked for you */
.picked-title { display: flex; align-items: center; gap: 18px; padding-left: 9px; font-size: 40px; line-height: 60px; font-weight: 700; }
.picked-title svg { width: 38px; height: 34px; color: #9810fa; }
.picked { display: flex; gap: 34px; margin: 33px 0 102px; }
.pick { display: flex; flex-direction: column; align-items: flex-start; width: 597px; padding: 43px; border: 2px solid #f3e8ff; border-radius: 51px; background: #faf5ff; box-shadow: 0 2px 6px rgba(0,0,0,.1), 0 2px 4px -2px rgba(0,0,0,.1); }
.ai { height: 49px; padding: 0 17px; border-radius: 25px; background: #fff; color: #8200db; font-size: 21px; line-height: 49px; font-weight: 700; box-shadow: 0 2px 6px rgba(0,0,0,.1), 0 2px 4px -2px rgba(0,0,0,.1); }
.pick h3 { margin-top: 12px; font-size: 36px; line-height: 60px; font-weight: 700; }
.pick p { min-height: 86px; margin-top: 2px; font-size: 28px; line-height: 43px; color: #4a5565; }
.monitor { display: inline-block; width: 34px; height: 29px; vertical-align: -5px; }
.pick button { width: 100%; height: 94px; margin-top: 25px; border-radius: 26px; background: #fff; color: #8200db; font-size: 28px; font-weight: 700; box-shadow: 0 2px 6px rgba(0,0,0,.1), 0 2px 4px -2px rgba(0,0,0,.1); }

/* Posts */
.columns { display: grid; grid-template-columns: repeat(3, 1fr); gap: 68px; max-width: 2731px; align-items: start; }
.posts { grid-column: span 2; display: grid; grid-template-columns: 1fr 1fr; gap: 51px; }
.card { position: relative; display: flex; flex-direction: column; min-height: 570px; padding: 51px; border: 2px solid #f3f4f6; border-radius: 51px; background: #fff; box-shadow: 0 2px 6px rgba(0,0,0,.1), 0 2px 4px -2px rgba(0,0,0,.1); }
.trash { position: absolute; top: 43px; right: 34px; color: #99a1af; }
.trash svg { width: 30px; height: 34px; }
.offer { display: flex; align-items: center; align-self: flex-start; gap: 6px; height: 49px; padding: 0 25px; border-radius: 25px; background: #dcfce7; color: #1b4d2e; font-size: 21px; font-weight: 700; }
.offer svg { width: 24px; height: 21px; }
.card h3 { margin-top: 17px; font-size: 41px; line-height: 60px; font-weight: 700; }
.card p { min-height: 97px; margin-top: 17px; font-size: 28px; line-height: 48px; color: #555; }
.meta { display: flex; justify-content: space-between; margin-top: 25px; padding-top: 36px; border-top: 2px solid #f3f4f6; font-size: 25px; line-height: 34px; font-weight: 700; }
.meta span { display: flex; align-items: center; gap: 7px; }
.user { width: 22px; height: 26px; }
.clock { width: 26px; height: 26px; }
.own { height: 94px; margin-top: 32px; border-radius: 26px; background: #f3f4f6; color: #99a1af; font-size: 28px; font-weight: 700; }

/* Map */
.map-card { padding: 18px 17px 17px; border: 2px solid #e5e7eb; border-radius: 51px; background: #fff; box-shadow: 0 2px 6px rgba(0,0,0,.1), 0 2px 4px -2px rgba(0,0,0,.1); }
.map { position: relative; height: 614px; border-radius: 34px; overflow: hidden; }
.map-art { width: 100%; height: 100%; }
.map-art path { vector-effect: non-scaling-stroke; }
.road, .water-lines path, .bound, .ferry, .barrier, .grid { fill: none; stroke-linejoin: round; }
.minor { stroke: #f9cf95; stroke-width: 2px; }
.major { stroke: #f8a88c; stroke-width: 3px; }
.motor { stroke: #e77d97; stroke-width: 3px; }
.rail { stroke: #8a8a86; stroke-width: 2px; }
.water-lines path { stroke: #aad3df; stroke-width: 2px; }
.water-lines .hudson { stroke-width: 17px; }
.water-lines .thin { stroke-width: 8px; }
.bound { stroke: #a592b3; stroke-width: 2px; }
.heavy { stroke: #9c8bab; stroke-width: 6px; }
.ferry { stroke: #8595ea; stroke-width: 2px; stroke-dasharray: 10 9; }
.barrier { stroke: #e6e8cc; stroke-width: 2px; }
.grid { stroke: #fff; stroke-width: 1px; opacity: .8; }
.places { font: 500 21px "Noto Sans", sans-serif; fill: #4c4c4c; stroke: #fff; stroke-opacity: .7; stroke-width: 4px; paint-order: stroke; }
.big { font-size: 26px; }
.region { font-style: italic; fill: #222; }
.pin use { fill: url(#blue); stroke: #2e6fa6; stroke-width: 2px; }
.pin .me use { fill: url(#green); stroke: #2e8a2a; }
.pin circle { fill: #fff; stroke: #3175ad; stroke-width: 2px; }
.pin .me circle { stroke: #2e8a2a; }
.zoom { position: absolute; left: 21px; top: 21px; width: 73px; border: 4px solid rgba(0,0,0,.25); border-radius: 9px; overflow: hidden; }
.zoom button { display: flex; align-items: center; justify-content: center; width: 100%; height: 64px; background: #fff; background-clip: padding-box; }
.zoom button + button { border-top: 2px solid #ccc; }
.zoom svg { width: 26px; height: 26px; stroke: #000; stroke-width: 5px; }
.credit { position: absolute; right: 0; bottom: 0; display: flex; align-items: center; gap: 7px; height: 36px; padding: 0 11px; background: rgba(255,255,255,.8); color: #0078a8; font: 26px "Liberation Sans", sans-serif; }
.credit svg { width: 25px; height: 17px; }
.map-foot { display: flex; align-items: center; gap: 17px; padding: 26px 34px; line-height: 34px; }
.map-title { margin-right: auto; font-size: 25px; font-weight: 700; color: #6a7282; }
.legend { display: flex; align-items: center; gap: 8px; font-size: 20px; font-weight: 700; }
.dot { width: 17px; height: 17px; border-radius: 50%; }
.you { background: #00a63e; }
.service { background: #2b7fff; }
```
